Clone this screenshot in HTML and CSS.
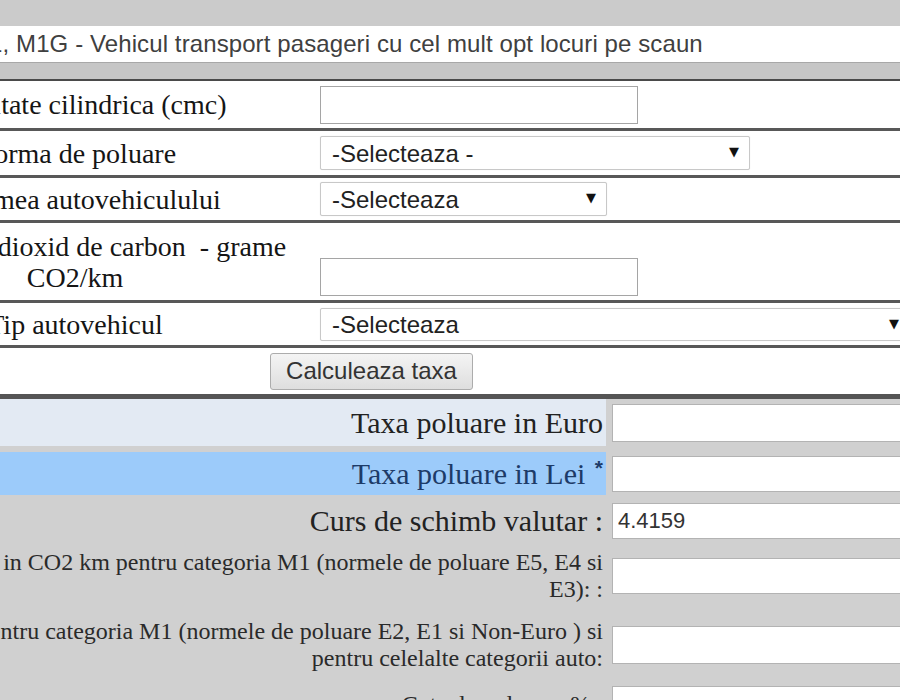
FILE: index.html
```html
<!DOCTYPE html>
<html>

<head>
    <meta charset="utf-8">
    <meta name="viewport" content="width=device-width, initial-scale=1">
    <link rel="stylesheet" href="styles.css">
</head>

<body>
    <div class="page">
        <!-- Categoria auto -->
        <div class="category">M1, M1G - Vehicul transport pasageri cu cel mult opt locuri pe scaun</div>
        <div class="strip"></div>

        <div class="form">
            <div class="row row-cc">
                <div class="label">Capacitate cilindrica (cmc)</div>
                <div class="field"><input type="text" class="txt"></div>
            </div>
            <div class="row row-norma">
                <div class="label">Norma de poluare</div>
                <div class="field">
                    <div class="sel sel-norma"><select><option>-Selecteaza -</option></select></div>
                </div>
            </div>
            <div class="row row-vechime">
                <div class="label">Vechimea autovehiculului</div>
                <div class="field">
                    <div class="sel sel-vechime"><select><option>-Selecteaza</option></select></div>
                </div>
            </div>
            <div class="row row-co2">
                <div class="label">Emisiile de dioxid de carbon&nbsp; - grame CO2/km</div>
                <div class="field field-bottom"><input type="text" class="txt"></div>
            </div>
            <div class="row row-tip">
                <div class="label">Tip autovehicul</div>
                <div class="field">
                    <div class="sel sel-tip"><select><option>-Selecteaza</option></select></div>
                </div>
            </div>
            <div class="row-button">
                <button class="btn">Calculeaza taxa</button>
            </div>
        </div>

        <!-- Rezultate -->
        <div class="results">
            <div class="res-row res-euro">
                <div class="res-label"><span>Taxa poluare in Euro</span></div>
                <div class="res-field"><input type="text" class="out out-big"></div>
            </div>
            <div class="res-row res-lei">
                <div class="res-label"><span>Taxa poluare in Lei <sup>*</sup></span></div>
                <div class="res-field"><input type="text" class="out"></div>
            </div>
            <div class="res-row res-curs">
                <div class="res-label"><span>Curs de schimb valutar :</span></div>
                <div class="res-field"><input type="text" class="out" value="4.4159"></div>
            </div>
            <div class="res-row res-e5">
                <div class="res-label small"><span>Emisii in CO2 km pentru categoria M1 (normele de poluare E5, E4 si<br>E3): :</span></div>
                <div class="res-field"><input type="text" class="out"></div>
            </div>
            <div class="res-row res-e2">
                <div class="res-label small"><span>Taxa pentru categoria M1 (normele de poluare E2, E1 si Non-Euro ) si<br>pentru celelalte categorii auto:</span></div>
                <div class="res-field"><input type="text" class="out out-big"></div>
            </div>
            <div class="res-row res-cota">
                <div class="res-label small"><span>Cota de reducere % :</span></div>
                <div class="res-field"><input type="text" class="out"></div>
            </div>
        </div>
    </div>
</body>

</html>
```

FILE: styles.css
```css
* {
    box-sizing: border-box
}

html,
body {
    overflow: hidden;
}

body {
    margin: 0;
    background-color: #cbcbcb;
    font-family: "Liberation Serif", "Times New Roman", serif;
    color: #151515;
}

/* page is shifted, the left side is cut off */
.page {
    margin-left: -155px;
    width: 1200px;
    padding-top: 26px;
}

.category {
    height: 37px;
    background-color: #fff;
    border-bottom: 1px solid #a8a8a8;
    padding-left: 124px;
    font-family: "Liberation Sans", Arial, sans-serif;
    font-size: 24px;
    letter-spacing: 0.1px;
    line-height: 36px;
    color: #404040;
}

.strip {
    height: 16px;
    background-color: #c6c6c6;
}

.form {
    background-color: #fff;
    border-top: 2px solid #4a4a4a;
}

.row {
    display: grid;
    grid-template-columns: 475px 1fr;
    align-items: center;
    border-bottom: 3px solid #585858;
}

.row-cc {
    height: 50px;
}

.row-norma {
    height: 47px;
}

.row-vechime {
    height: 45px;
}

.row-co2 {
    height: 80px;
}

.row-tip {
    height: 45px;
}

.label {
    text-align: center;
    padding-right: 15px;
    font-size: 28px;
    line-height: 31px;
}

.field-bottom {
    align-self: end;
    padding-bottom: 4px;
}

.txt {
    display: block;
    width: 318px;
    height: 38px;
    border: 1px solid #a5a5a5;
    background-color: #fff;
}

/* Select boxes with the small black arrow */
.sel {
    position: relative;
    height: 34px;
}

.sel select {
    appearance: none;
    -webkit-appearance: none;
    width: 100%;
    height: 100%;
    border: 1px solid #c8c8c8;
    border-radius: 2px;
    background-color: #fff;
    box-shadow: 0 0 1px #ddd;
    padding: 0 0 0 11px;
    font-family: "Liberation Sans", Arial, sans-serif;
    font-size: 24px;
    color: #222;
}

.sel::after {
    content: "\25BC";
    position: absolute;
    right: 11px;
    top: 8px;
    font-family: "DejaVu Sans", sans-serif;
    font-size: 13px;
    color: #111;
    pointer-events: none;
}

.sel-norma {
    width: 430px;
}

.sel-vechime {
    width: 287px;
}

.sel-tip {
    width: 590px;
    height: 33px;
}

.row-button {
    height: 51px;
    display: flex;
    align-items: center;
    padding-left: 425px;
    border-bottom: 5px solid #555;
}

.btn {
    width: 203px;
    height: 37px;
    border: 1px solid #acacac;
    border-radius: 3px;
    background: linear-gradient(#f4f4f4, #dedede);
    font-family: "Liberation Sans", Arial, sans-serif;
    font-size: 24px;
    color: #333;
    padding: 0;
}

/* Results table */
.results {
    background-color: #d0d0d0;
    display: flex;
    flex-direction: column;
    gap: 6px;
}

.res-row {
    display: grid;
    grid-template-columns: 761px 1fr;
    column-gap: 6px;
    align-items: center;
}

.res-label {
    align-self: stretch;
    display: flex;
    align-items: center;
    justify-content: flex-end;
    text-align: right;
    padding-right: 3px;
    font-size: 30px;
    line-height: 30px;
    color: #222;
}

.res-label sup {
    font-family: "Liberation Sans", Arial, sans-serif;
    font-size: 21px;
    font-weight: bold;
    vertical-align: top;
    line-height: 18px;
    margin-left: 2px;
}

.res-label.small {
    font-size: 24px;
    line-height: 27px;
    color: #2a2a2a;
}

.res-euro {
    height: 47px;
}

.res-euro .res-label {
    background-color: #e3eaf3;
}

.res-lei {
    height: 43px;
}

.res-lei .res-label {
    background-color: #9ccbfa;
    color: #1d3b68;
}

.res-curs {
    height: 39px;
}

.res-e5 {
    height: 60px;
}

.res-e2 {
    height: 66px;
}

.res-cota {
    height: 40px;
}

.out {
    display: block;
    width: 300px;
    height: 36px;
    border: 1px solid #b3b3b3;
    background-color: #fff;
    padding-left: 5px;
    font-family: "Liberation Sans", Arial, sans-serif;
    font-size: 22px;
    color: #333;
}

.out-big {
    height: 38px;
}
```
